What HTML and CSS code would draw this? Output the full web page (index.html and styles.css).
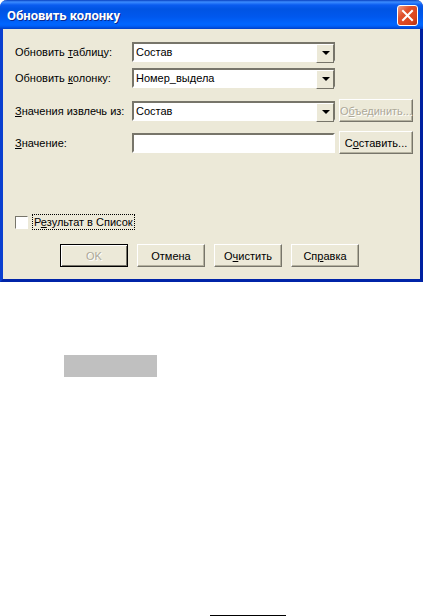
FILE: index.html
```html
<!DOCTYPE html>
<html lang="ru">
<head>
  <meta charset="UTF-8" />
  <meta name="viewport" content="width=device-width, initial-scale=1.0" />
  <title>Обновить колонку</title>
  <link rel="stylesheet" href="styles.css">
</head>
<body>
  <form class="dialog">
    <header class="titlebar">
      <h1 class="title">Обновить колонку</h1>
      <button type="button" class="close" aria-label="Закрыть">
        <svg viewBox="0 0 21 21" width="21" height="21">
          <path d="M6 6L15 15M15 6L6 15" stroke="#fff" stroke-width="2" stroke-linecap="square" />
        </svg>
      </button>
    </header>

    <div class="content">
      <div class="fields">
        <label for="table">Обновить <u>т</u>аблицу:</label>
        <div class="combo">
          <select id="table"><option>Состав</option></select>
        </div>
        <label for="column">Обновить <u>к</u>олонку:</label>
        <div class="combo">
          <select id="column"><option>Номер_выдела</option></select>
        </div>
      </div>

      <div class="fields source">
        <label for="source"><u>З</u>начения извлечь из:</label>
        <div class="combo">
          <select id="source"><option>Состав</option></select>
        </div>
        <button type="button" class="btn" disabled>О<u>б</u>ъединить...</button>
        <label for="value"><u>З</u>начение:</label>
        <input type="text" id="value" class="text">
        <button type="button" class="btn">С<u>о</u>ставить...</button>
      </div>

      <div class="option">
        <input type="checkbox" id="browse" class="check">
        <label for="browse" class="focused">Р<u>е</u>зультат в Список</label>
      </div>

      <div class="actions">
        <button type="submit" class="btn default" disabled>OK</button>
        <button type="button" class="btn">Отмена</button>
        <button type="reset" class="btn">О<u>ч</u>истить</button>
        <button type="button" class="btn">Сп<u>р</u>авка</button>
      </div>
    </div>
  </form>

  <div class="block"></div>
  <div class="rule"></div>
</body>
</html>
```
FILE: styles.css
```css
* {
  box-sizing: border-box;
}
html, body {
  height: 100%;
  margin: 0;
}
body {
  display: flex;
  flex-direction: column;
  background: #fff;
  font-family: "Liberation Sans", Arial, sans-serif;
  font-size: 11px;
  line-height: 14px;
  color: #000;
}
button, input, select {
  font: inherit;
  color: inherit;
  margin: 0;
}
u {
  text-underline-offset: 1px;
}

/* window frame */
.dialog {
  background: #ece9d8;
  border: 3px solid #0a3fd0;
  border-top: 0;
  border-right-color: #0020a0;
  border-bottom-color: #0024a8;
  border-radius: 7px 7px 0 0;
}
.titlebar {
  display: flex;
  align-items: center;
  justify-content: space-between;
  height: 29px;
  margin: 0 -3px;
  padding: 2px 5px 0 7px;
  border-radius: 7px 7px 0 0;
  background: linear-gradient(#0840c0, #3c8cff 2px, #0a5cf0 5px, #0054e3 9px, #0058ee 17px, #0066ff 24px, #0060f8 26px, #0040c8);
}
.title {
  margin: 0;
  font-family: Roboto, "Noto Sans", sans-serif;
  font-size: 13px;
  line-height: 18px;
  font-weight: bold;
  color: #fff;
  text-shadow: 1px 1px #0a2a90;
}
.close {
  width: 21px;
  height: 21px;
  padding: 0;
  border: 1px solid #fff;
  border-radius: 3px;
  background: linear-gradient(135deg, #f0a088, #e0502c 35%, #d8441c 75%, #b03010);
}
.close svg {
  display: block;
  margin: -1px;
}

/* fields */
.content {
  padding: 13px 7px 12px 12px;
}
.fields {
  display: grid;
  grid-template-columns: 117px 1fr 74px;
  row-gap: 6px;
  align-items: center;
  padding-right: 4px;
}
.fields label {
  grid-column: 1;
  white-space: nowrap;
}
.source {
  margin-top: 11px;
  row-gap: 9px;
}
.fields .btn {
  margin-left: 4px;
  width: 74px;
}
.combo {
  position: relative;
  height: 20px;
}
.combo select, .text {
  display: block;
  width: 100%;
  height: 20px;
  padding: 0 20px 0 2px;
  border: 2px solid;
  border-color: #77756a #fff #fff #77756a;
  border-radius: 0;
  background: #fff;
  appearance: none;
  outline: 0;
}
.combo select {
  border-right-color: #77756a;
  border-right-width: 1px;
}
.combo::before {
  content: "";
  position: absolute;
  top: 2px;
  right: 1px;
  width: 16px;
  height: 17px;
  background: #ece9d8;
  border: 1px solid;
  border-color: #fff #77756a #77756a #fff;
  pointer-events: none;
}
.combo::after {
  content: "";
  position: absolute;
  top: 9px;
  right: 5px;
  border: 4px solid transparent;
  border-top-color: #000;
  border-bottom: 0;
  pointer-events: none;
}

/* buttons */
.btn {
  width: 68px;
  height: 23px;
  padding: 0;
  border: 1px solid;
  border-color: #fff #77756a #77756a #fff;
  border-radius: 0;
  background: #ece9d8;
  box-shadow: inset -1px -1px #b5b2a0;
  white-space: nowrap;
}
.btn:disabled {
  color: #aca899;
  text-shadow: 1px 1px #fff;
}
.default {
  border-color: #000;
  box-shadow: inset 1px 1px #fff, inset -1px -1px #77756a;
}

.option {
  display: flex;
  align-items: center;
  gap: 4px;
  margin-top: 60px;
}
.check {
  width: 13px;
  height: 13px;
  border: 1px solid;
  border-color: #77756a #fff #fff #77756a;
  background: #fff;
  appearance: none;
}
.focused {
  padding: 0 1px;
  border: 1px dotted #000;
}
.actions {
  display: flex;
  gap: 9px;
  margin: 14px 0 0 45px;
}

/* leftovers of the page under the window */
.block {
  width: 93px;
  height: 22px;
  margin: 73px 0 0 64px;
  background: #c0c0c0;
}
.rule {
  width: 76px;
  height: 1px;
  margin: auto 0 0 210px;
  background: #000;
}
```
